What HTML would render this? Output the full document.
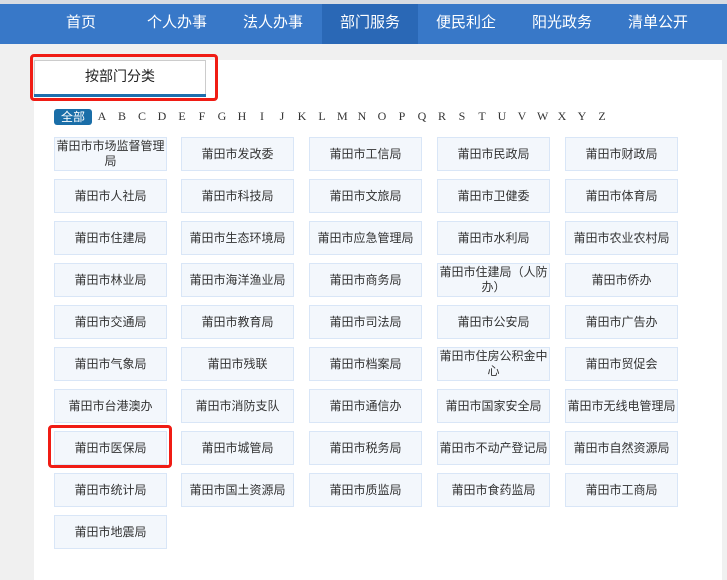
<!DOCTYPE html>
<html><head><meta charset="utf-8"><style>
*{margin:0;padding:0;box-sizing:border-box}
body{width:727px;height:574px;overflow:hidden;background:#f0f0f0;font-family:"Liberation Sans","Noto Sans CJK SC",sans-serif;position:relative}
.top{position:absolute;left:0;top:0;width:727px;height:4px;background:#d8dce2}
.nav{position:absolute;left:0;top:4px;width:727px;height:40px;background:#3878c8}
.nav span{position:absolute;top:0;width:96px;height:40px;line-height:38px;text-align:center;color:#fff;font-size:15px}
.nav .on{background:#2a68b6}
.panel{position:absolute;left:34px;top:60px;width:688px;height:520px;background:#fff}
.tab{position:absolute;left:34px;top:60px;width:172px;height:37px;border:1px solid #ccc;border-bottom:none;text-align:center;line-height:31px;font-size:14px;color:#222}
.tab:after{content:"";position:absolute;left:-1px;right:-1px;bottom:0;height:3px;background:#1e6fae}
.red{position:absolute;border:3px solid #f01c14;border-radius:4px}
.letters{position:absolute;top:109px;left:0;font-family:"Liberation Serif",serif;font-size:12px;color:#333}
.letters i{position:absolute;top:0;font-style:normal;width:10px;text-align:center}
.all{position:absolute;left:54px;top:109px;width:38px;height:16px;background:#1a6ea8;color:#fff;border-radius:3px;font-size:12px;text-align:center;line-height:16px}
.b{position:absolute;width:113px;height:34px;background:#f3f7fc;border:1px solid #d9e6f7;color:#333;font-size:12px;text-align:center;display:flex;align-items:center;justify-content:center;line-height:15px;padding:0}
</style></head><body>
<div class="top"></div>
<div class="nav">
<span style="left:33px">首页</span><span style="left:129px">个人办事</span><span style="left:225px">法人办事</span><span class="on" style="left:322px">部门服务</span><span style="left:418px">便民利企</span><span style="left:514px">阳光政务</span><span style="left:610px">清单公开</span>
</div>
<div class="panel"></div>
<div class="tab">按部门分类</div>
<div class="red" style="left:30px;top:54px;width:188px;height:47px"></div>
<div class="all">全部</div>
<div class="letters" id="L"></div>
<div id="G"></div>
<div class="red" style="left:48px;top:425px;width:124px;height:43px"></div>
<script>
var s="ABCDEFGHIJKLMNOPQRSTUVWXYZ",h="";
for(var i=0;i<26;i++)h+='<i style="left:'+(97+i*20)+'px">'+s[i]+'</i>';
document.getElementById("L").innerHTML=h;
var n=["莆田市市场监督管理局","莆田市发改委","莆田市工信局","莆田市民政局","莆田市财政局","莆田市人社局","莆田市科技局","莆田市文旅局","莆田市卫健委","莆田市体育局","莆田市住建局","莆田市生态环境局","莆田市应急管理局","莆田市水利局","莆田市农业农村局","莆田市林业局","莆田市海洋渔业局","莆田市商务局","莆田市住建局（人防办）","莆田市侨办","莆田市交通局","莆田市教育局","莆田市司法局","莆田市公安局","莆田市广告办","莆田市气象局","莆田市残联","莆田市档案局","莆田市住房公积金中心","莆田市贸促会","莆田市台港澳办","莆田市消防支队","莆田市通信办","莆田市国家安全局","莆田市无线电管理局","莆田市医保局","莆田市城管局","莆田市税务局","莆田市不动产登记局","莆田市自然资源局","莆田市统计局","莆田市国土资源局","莆田市质监局","莆田市食药监局","莆田市工商局","莆田市地震局"];
var x=[54,181,309,437,565],g="";
for(var i=0;i<n.length;i++)g+='<div class="b" style="left:'+x[i%5]+'px;top:'+(137+Math.floor(i/5)*42)+'px">'+n[i]+'</div>';
document.getElementById("G").innerHTML=g;
</script>
</body></html>
